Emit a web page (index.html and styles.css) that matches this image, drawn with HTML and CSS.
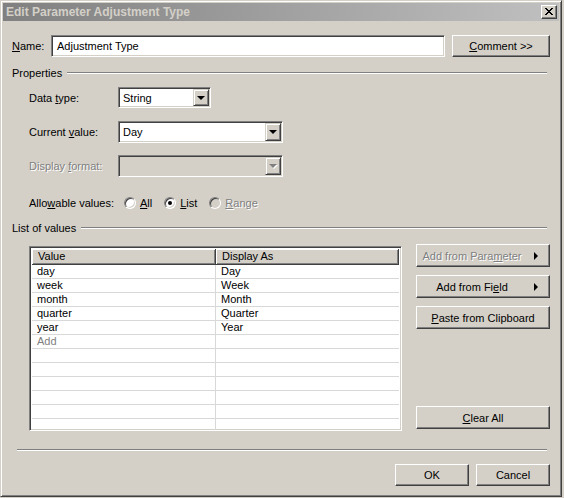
FILE: index.html
```html
<!DOCTYPE html>
<html lang="en">

<head>
  <meta charset="UTF-8">
  <link rel="stylesheet" href="styles.css">
  <title>Edit Parameter Adjustment Type</title>
</head>

<body>
  <div class="window">
    <div class="titlebar">
      <span class="title">Edit Parameter Adjustment Type</span>
      <span class="close">
        <svg width="8" height="7" viewBox="0 0 8 7" shape-rendering="crispEdges">
          <path d="M0 0h2v1H0z M6 0h2v1H6z M1 1h2v1H1z M5 1h2v1H5z M2 2h4v1H2z M3 3h2v1H3z M2 4h4v1H2z M1 5h2v1H1z M5 5h2v1H5z M0 6h2v1H0z M6 6h2v1H6z" fill="#000"/>
        </svg>
      </span>
    </div>

    <div class="dlg">
      <div class="name-row">
        <label class="name-label"><u>N</u>ame:</label>
        <div class="textbox">Adjustment Type</div>
        <div class="btn btn-comment"><span><u>C</u>omment &gt;&gt;</span></div>
      </div>

      <div class="group">Properties</div>

      <div class="field f-type">
        <label class="flabel">Data <u>t</u>ype:</label>
        <div class="combo combo-short"><span class="ctext">String</span><span class="drop"><span class="tri"></span></span></div>
      </div>
      <div class="field f-value">
        <label class="flabel">Current <u>v</u>alue:</label>
        <div class="combo combo-long"><span class="ctext">Day</span><span class="drop"><span class="tri"></span></span></div>
      </div>
      <div class="field f-format">
        <label class="flabel disabled">Display <u>f</u>ormat:</label>
        <div class="combo combo-long combo-off"><span class="ctext"></span><span class="drop"><span class="tri tri-off"></span></span></div>
      </div>
      <div class="field f-allow">
        <label class="alabel">Allo<u>w</u>able values:</label>
        <span class="opt"><span class="radio"></span><span><u>A</u>ll</span></span>
        <span class="opt"><span class="radio"><span class="dot"></span></span><span><u>L</u>ist</span></span>
        <span class="opt"><span class="radio radio-off"></span><span class="disabled"><u>R</u>ange</span></span>
      </div>

      <div class="group group-list">List of values</div>

      <div class="list-area">
        <div class="grid">
          <div class="row head">
            <div class="cell">Value</div>
            <div class="cell">Display As</div>
          </div>
          <div class="row"><div class="cell">day</div><div class="cell">Day</div></div>
          <div class="row"><div class="cell">week</div><div class="cell">Week</div></div>
          <div class="row"><div class="cell">month</div><div class="cell">Month</div></div>
          <div class="row"><div class="cell">quarter</div><div class="cell">Quarter</div></div>
          <div class="row"><div class="cell">year</div><div class="cell">Year</div></div>
          <div class="row"><div class="cell placeholder">Add</div><div class="cell"></div></div>
          <div class="row"><div class="cell"></div><div class="cell"></div></div>
          <div class="row"><div class="cell"></div><div class="cell"></div></div>
          <div class="row"><div class="cell"></div><div class="cell"></div></div>
          <div class="row"><div class="cell"></div><div class="cell"></div></div>
          <div class="row"><div class="cell"></div><div class="cell"></div></div>
          <div class="row"><div class="cell"></div><div class="cell"></div></div>
        </div>

        <div class="side">
          <div class="btn btn-menu"><span class="btext disabled">Add from Para<u>m</u>eter</span><span class="rarrow"><span class="rtri"></span></span></div>
          <div class="btn btn-menu"><span class="btext">Add from Fi<u>e</u>ld</span><span class="rarrow"><span class="rtri"></span></span></div>
          <div class="btn btn-side"><span><u>P</u>aste from Clipboard</span></div>
          <div class="btn btn-side btn-clear"><span><u>C</u>lear All</span></div>
        </div>
      </div>

      <div class="sep"></div>

      <div class="footer">
        <div class="btn btn-foot">OK</div>
        <div class="btn btn-foot">Cancel</div>
      </div>
    </div>
  </div>
</body>

</html>
```

FILE: styles.css
```css
body {
  margin: 0;
  background: #d4d0c8;
  font-family: "Liberation Sans", Arial, sans-serif;
  font-size: 11px;
  color: #000;
}

u {
  text-decoration: underline;
  text-underline-offset: 1px;
}

/* window frame */
.window {
  width: 562px;
  height: 497px;
  box-sizing: border-box;
  background: #d4d0c8;
  border: 1px solid;
  border-color: #d4d0c8 #404040 #404040 #d4d0c8;
  box-shadow: inset 1px 1px #fff, inset -1px -1px #808080;
  padding: 2px;
  display: flex;
  flex-direction: column;
}

.titlebar {
  height: 18px;
  flex: none;
  background: linear-gradient(to right, #808080, #c0c0c0);
  display: flex;
  align-items: center;
  justify-content: space-between;
  padding: 0 2px 0 2px;
}

.title {
  color: #d4d0c8;
  font-weight: bold;
  font-size: 12px;
  padding-left: 1px;
}

.close {
  width: 16px;
  height: 14px;
  box-sizing: border-box;
  background: #d4d0c8;
  border: 1px solid;
  border-color: #fff #404040 #404040 #fff;
  box-shadow: inset -1px -1px #808080;
  display: flex;
  align-items: center;
  justify-content: center;
  padding: 0 1px 1px 0;
}

.close svg {
  display: block;
}

/* dialog body */
.dlg {
  flex: 1;
  padding: 14px 9px 0 9px;
  display: flex;
  flex-direction: column;
}

.disabled {
  color: #808080;
  text-shadow: 1px 1px #fff;
}

.name-row {
  display: flex;
  align-items: center;
  height: 22px;
}

.name-label {
  width: 39px;
}

.textbox,
.combo,
.grid {
  box-sizing: border-box;
  border: 1px solid;
  border-color: #808080 #fff #fff #808080;
  box-shadow: inset 1px 1px #404040, inset -1px -1px #d4d0c8;
  background: #fff;
}

.textbox {
  width: 394px;
  height: 22px;
  padding-left: 5px;
  display: flex;
  align-items: center;
}

.btn {
  box-sizing: border-box;
  background: #d4d0c8;
  border: 1px solid;
  border-color: #fff #404040 #404040 #fff;
  box-shadow: inset -1px -1px #808080;
  display: flex;
  align-items: center;
  justify-content: center;
}

.btn-comment {
  width: 98px;
  height: 22px;
  margin-left: auto;
}

/* group headers with etched rule */
.group {
  display: flex;
  align-items: center;
  height: 14px;
  margin-top: 9px;
}

.group::after {
  content: "";
  flex: 1;
  border-top: 1px solid #808080;
  border-bottom: 1px solid #fff;
  margin-left: 5px;
  margin-right: 3px;
}

.group-list {
  margin-top: 10px;
}

.field {
  display: flex;
  align-items: center;
  margin-left: 17px;
}

.flabel {
  width: 89px;
}

.f-type {
  margin-top: 7px;
}

.f-value {
  margin-top: 13px;
}

.f-format {
  margin-top: 12px;
}

.f-allow {
  margin-top: 18px;
  height: 16px;
}

.combo {
  display: flex;
  align-items: stretch;
  padding: 1px;
}

.combo-short {
  width: 93px;
  height: 21px;
}

.combo-long {
  width: 165px;
  height: 22px;
}

.combo-off {
  background: #d4d0c8;
}

.ctext {
  flex: 1;
  display: flex;
  align-items: center;
  padding-left: 3px;
}

.drop {
  width: 16px;
  box-sizing: border-box;
  border: 1px solid;
  border-color: #d4d0c8 #404040 #404040 #d4d0c8;
  box-shadow: inset 1px 1px #fff, inset -1px -1px #808080;
  background: #d4d0c8;
  display: flex;
  align-items: center;
  justify-content: center;
}

.tri {
  width: 0;
  height: 0;
  border-left: 4px solid transparent;
  border-right: 4px solid transparent;
  border-top: 4px solid #000;
  margin-left: -1px;
}

.tri-off {
  border-top-color: #808080;
  filter: drop-shadow(1px 1px 0 #fff);
}

/* radio group */
.alabel {
  width: 95px;
}

.opt {
  display: inline-flex;
  align-items: center;
  gap: 4px;
  margin-right: 12px;
}

.radio {
  width: 12px;
  height: 12px;
  box-sizing: border-box;
  border-radius: 50%;
  background: #fff;
  border: 1px solid;
  border-color: #808080 #fff #fff #808080;
  box-shadow: inset 1px 1px #404040, inset -1px -1px #d4d0c8;
  display: flex;
  align-items: center;
  justify-content: center;
}

.radio-off {
  background: #d4d0c8;
}

.dot {
  width: 4px;
  height: 4px;
  border-radius: 50%;
  background: #000;
}

/* list of values */
.list-area {
  display: flex;
  align-items: flex-start;
  margin-top: 9px;
  margin-left: 17px;
  height: 187px;
}

.grid {
  width: 373px;
  height: 185px;
  margin-top: 2px;
  padding: 2px;
  overflow: hidden;
}

.row {
  display: grid;
  grid-template-columns: 184px 1fr;
  height: 14px;
  box-sizing: border-box;
  border-bottom: 1px solid #d8d8d8;
}

.cell {
  padding-left: 5px;
  line-height: 13px;
  white-space: nowrap;
}

.row .cell:first-child {
  border-right: 1px solid #d8d8d8;
}

.row.head {
  height: 16px;
  border-bottom: none;
}

.head .cell {
  background: #d4d0c8;
  border-right: 1px solid #404040;
  border-bottom: 1px solid #404040;
  box-shadow: inset 1px 1px #fff, inset -1px -1px #808080;
  line-height: 15px;
  padding-left: 6px;
}

.head .cell:first-child {
  border-right: 1px solid #404040;
}

.placeholder {
  color: #808080;
}

.side {
  width: 134px;
  height: 185px;
  margin-left: auto;
  display: flex;
  flex-direction: column;
  gap: 8px;
}

.btn-menu,
.btn-side {
  height: 23px;
}

.btext {
  flex: 1;
  text-align: center;
}

.rarrow {
  width: 22px;
  display: flex;
  align-items: center;
  padding-left: 7px;
  box-sizing: border-box;
}

.rtri {
  width: 0;
  height: 0;
  border-top: 4px solid transparent;
  border-bottom: 4px solid transparent;
  border-left: 4px solid #000;
}

.btn-clear {
  margin-top: auto;
}

.sep {
  margin: 18px 3px 0 5px;
  border-top: 1px solid #808080;
  border-bottom: 1px solid #fff;
}

.footer {
  display: flex;
  justify-content: flex-end;
  gap: 7px;
  margin-top: 13px;
}

.btn-foot {
  width: 74px;
  height: 22px;
}
```
